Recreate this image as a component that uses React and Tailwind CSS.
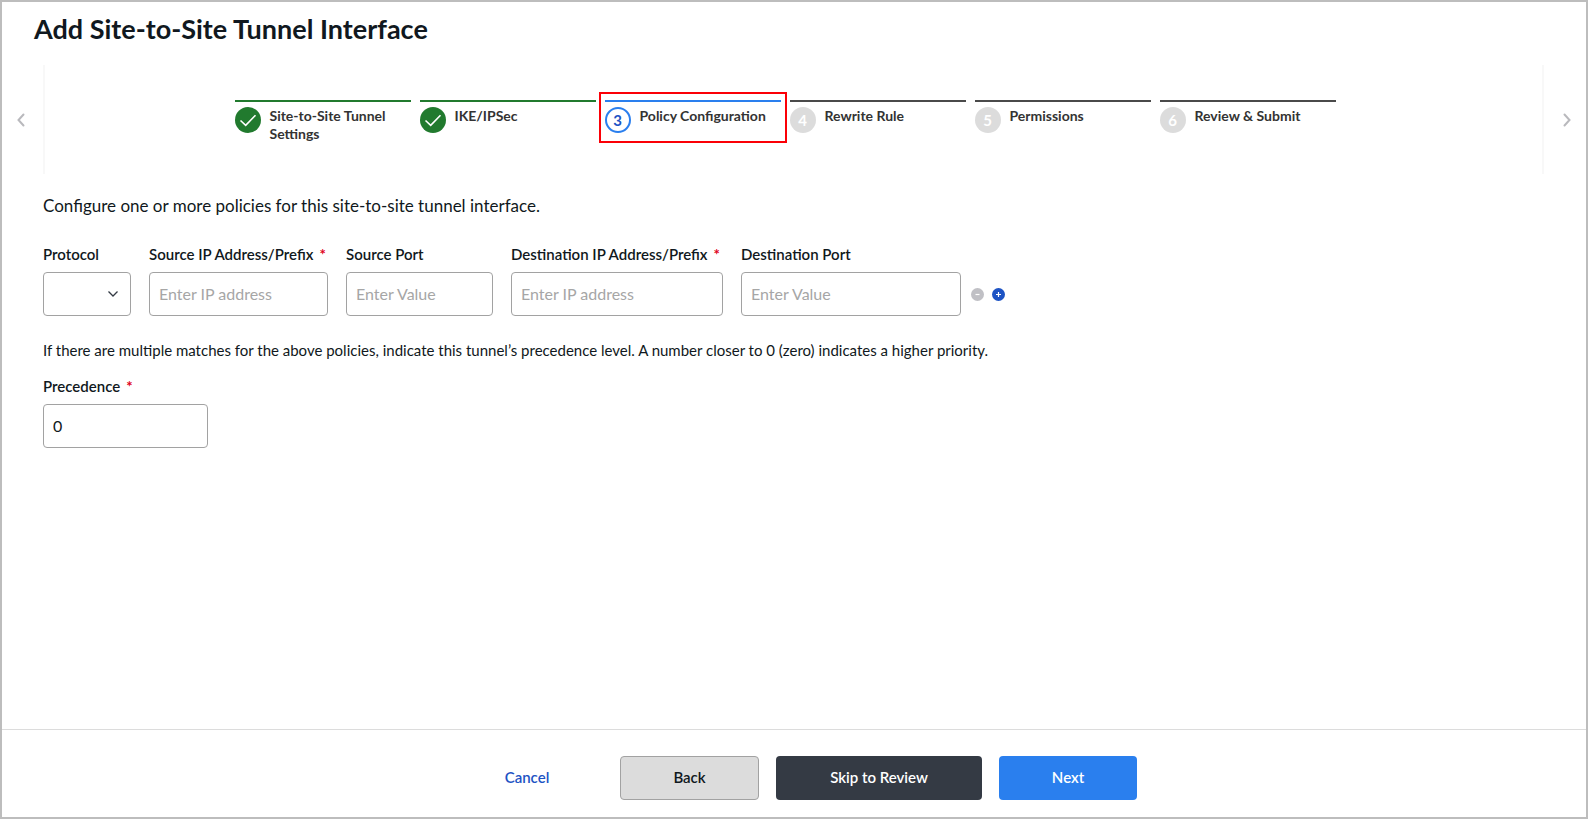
import React, { useState } from 'react';

const STEPS = [
  { label: 'Site-to-Site Tunnel Settings', status: 'done' },
  { label: 'IKE/IPSec', status: 'done' },
  { label: 'Policy Configuration', status: 'current' },
  { label: 'Rewrite Rule', status: 'pending' },
  { label: 'Permissions', status: 'pending' },
  { label: 'Review & Submit', status: 'pending' },
];

const lineStyles = {
  done: 'border-[#217a2e]',
  current: 'border-[#2a7fee]',
  pending: 'border-[#4a4a4a]',
};

const badgeStyles = {
  done: 'bg-[#217a2e] text-white',
  current: 'border-2 border-[#2a7fee] bg-white text-[#1d53c4]',
  pending: 'bg-[#dcdcdc] text-white',
};

const inputClass =
  'h-11 w-full rounded border border-[#a2a2a2] bg-white px-[9px] pb-[2px] text-base text-[#101820] placeholder:text-[#a6a6a6]';

const Step = ({ step, number }) => (
  <li className={`relative w-[176px] border-t-2 pt-[5px] ${lineStyles[step.status]}`}>
    <button type="button" className="flex w-full items-start gap-[9px] text-left">
      <span
        className={`flex size-[26px] shrink-0 items-center justify-center rounded-full text-[15px] font-bold ${badgeStyles[step.status]}`}
      >
        {step.status === 'done' ? (
          <svg viewBox="0 0 26 26" className="size-[26px]" fill="none" stroke="currentColor" strokeWidth="1.6">
            <path d="M5.5 13.5 10.7 18.3 20.5 8.2" />
          </svg>
        ) : (
          number
        )}
      </span>
      <span className="text-sm leading-[18px] font-bold text-[#333]">{step.label}</span>
    </button>
    {step.status === 'current' && (
      <span className="pointer-events-none absolute -inset-x-[6px] -top-[10px] h-[51px] border-2 border-[#fb0007]" />
    )}
  </li>
);

const Field = ({ id, label, required, className, children }) => (
  <div className={className}>
    <label htmlFor={id} className="mb-2 block text-[15px] leading-5 font-semibold whitespace-nowrap text-[#101820]">
      {label}
      {required && <span className="ml-[6px] font-bold text-[#e0001b]">*</span>}
    </label>
    {children}
  </div>
);

const Chevron = ({ d }) => (
  <svg viewBox="0 0 8 14" className="h-[14px] w-2" fill="none" stroke="#b9b9bd" strokeWidth="2" strokeLinecap="round">
    <path d={d} />
  </svg>
);

const App = () => {
  const [protocol, setProtocol] = useState('');
  const [precedence, setPrecedence] = useState('0');

  return (
    <div className="flex min-h-screen flex-col border-2 border-[#bdbdbd] bg-white font-['Lato',sans-serif] text-[#101820]">
      <h1 className="px-8 pt-[9px] text-[27px] leading-9 font-bold">Add Site-to-Site Tunnel Interface</h1>

      <nav aria-label="Progress" className="mt-[18px] flex h-[109px] items-center">
        <button type="button" aria-label="Previous steps" className="flex w-[41px] justify-center pr-1">
          <Chevron d="M6.5 1.5 1.5 7 6.5 12.5" />
        </button>
        <ol className="flex h-full flex-1 justify-center gap-[9px] border-x-2 border-[#f8f8f8] pt-[35px] pr-[17px]">
          {STEPS.map((step, index) => (
            <Step key={step.label} step={step} number={index + 1} />
          ))}
        </ol>
        <button type="button" aria-label="Next steps" className="flex w-[42px] justify-center pl-1">
          <Chevron d="M1.5 1.5 6.5 7 1.5 12.5" />
        </button>
      </nav>

      <main className="flex-1 px-[41px] pt-5">
        <p className="text-[17px] leading-6">Configure one or more policies for this site-to-site tunnel interface.</p>

        <div className="mt-[26px] flex items-end gap-[18px]">
          <Field id="protocol" label="Protocol" className="w-[88px]">
            <div className="relative">
              <select
                id="protocol"
                value={protocol}
                onChange={(e) => setProtocol(e.target.value)}
                className={`appearance-none ${inputClass}`}
              >
                <option value=""></option>
                <option value="tcp">TCP</option>
                <option value="udp">UDP</option>
              </select>
              <svg
                viewBox="0 0 10 6"
                className="pointer-events-none absolute top-[19px] right-[13px] h-[6px] w-[10px]"
                fill="none"
                stroke="#333a44"
                strokeWidth="1.3"
              >
                <path d="M.5.5 5 5 9.5.5" />
              </svg>
            </div>
          </Field>
          <Field id="source-ip" label="Source IP Address/Prefix" required className="w-[179px]">
            <input id="source-ip" type="text" placeholder="Enter IP address" className={inputClass} />
          </Field>
          <Field id="source-port" label="Source Port" className="w-[147px]">
            <input id="source-port" type="text" placeholder="Enter Value" className={inputClass} />
          </Field>
          <Field id="dest-ip" label="Destination IP Address/Prefix" required className="w-[212px]">
            <input id="dest-ip" type="text" placeholder="Enter IP address" className={inputClass} />
          </Field>
          <Field id="dest-port" label="Destination Port" className="w-[220px]">
            <input id="dest-port" type="text" placeholder="Enter Value" className={inputClass} />
          </Field>
          <div className="-ml-2 flex h-11 items-center gap-2">
            <button type="button" aria-label="Remove policy">
              <svg viewBox="0 0 13 13" className="size-[13px]">
                <circle cx="6.5" cy="6.5" r="6.5" fill="#c0c0c5" />
                <path d="M4.5 6.5h4" stroke="#fff" strokeWidth="1.2" />
              </svg>
            </button>
            <button type="button" aria-label="Add policy">
              <svg viewBox="0 0 13 13" className="size-[13px]">
                <circle cx="6.5" cy="6.5" r="6.5" fill="#1d53c4" />
                <path d="M4 6.5h5M6.5 4v5" stroke="#fff" strokeWidth="1.2" />
              </svg>
            </button>
          </div>
        </div>

        <p className="mt-[22px] text-[15px] leading-6">
          If there are multiple matches for the above policies, indicate this tunnel’s precedence level. A number closer
          to 0 (zero) indicates a higher priority.
        </p>

        <Field id="precedence" label="Precedence" required className="mt-[14px] w-[165px]">
          <input
            id="precedence"
            type="text"
            value={precedence}
            onChange={(e) => setPrecedence(e.target.value)}
            className={inputClass}
          />
        </Field>
      </main>

      <footer className="flex justify-center gap-[17px] border-t border-[#dcdcdc] pt-[26px] pb-[17px] text-[15px] font-semibold">
        <button type="button" className="h-11 w-[152px] pb-[2px] text-[#1d53c4]">
          Cancel
        </button>
        <button type="button" className="h-11 w-[139px] rounded border border-[#a2a2a2] bg-[#dcdcdc] pb-[2px]">
          Back
        </button>
        <button type="button" className="h-11 w-[206px] rounded bg-[#343a44] pb-[2px] text-white">
          Skip to Review
        </button>
        <button type="button" className="h-11 w-[138px] rounded bg-[#2a7fee] pb-[2px] text-white">
          Next
        </button>
      </footer>
    </div>
  );
};

export default App;
